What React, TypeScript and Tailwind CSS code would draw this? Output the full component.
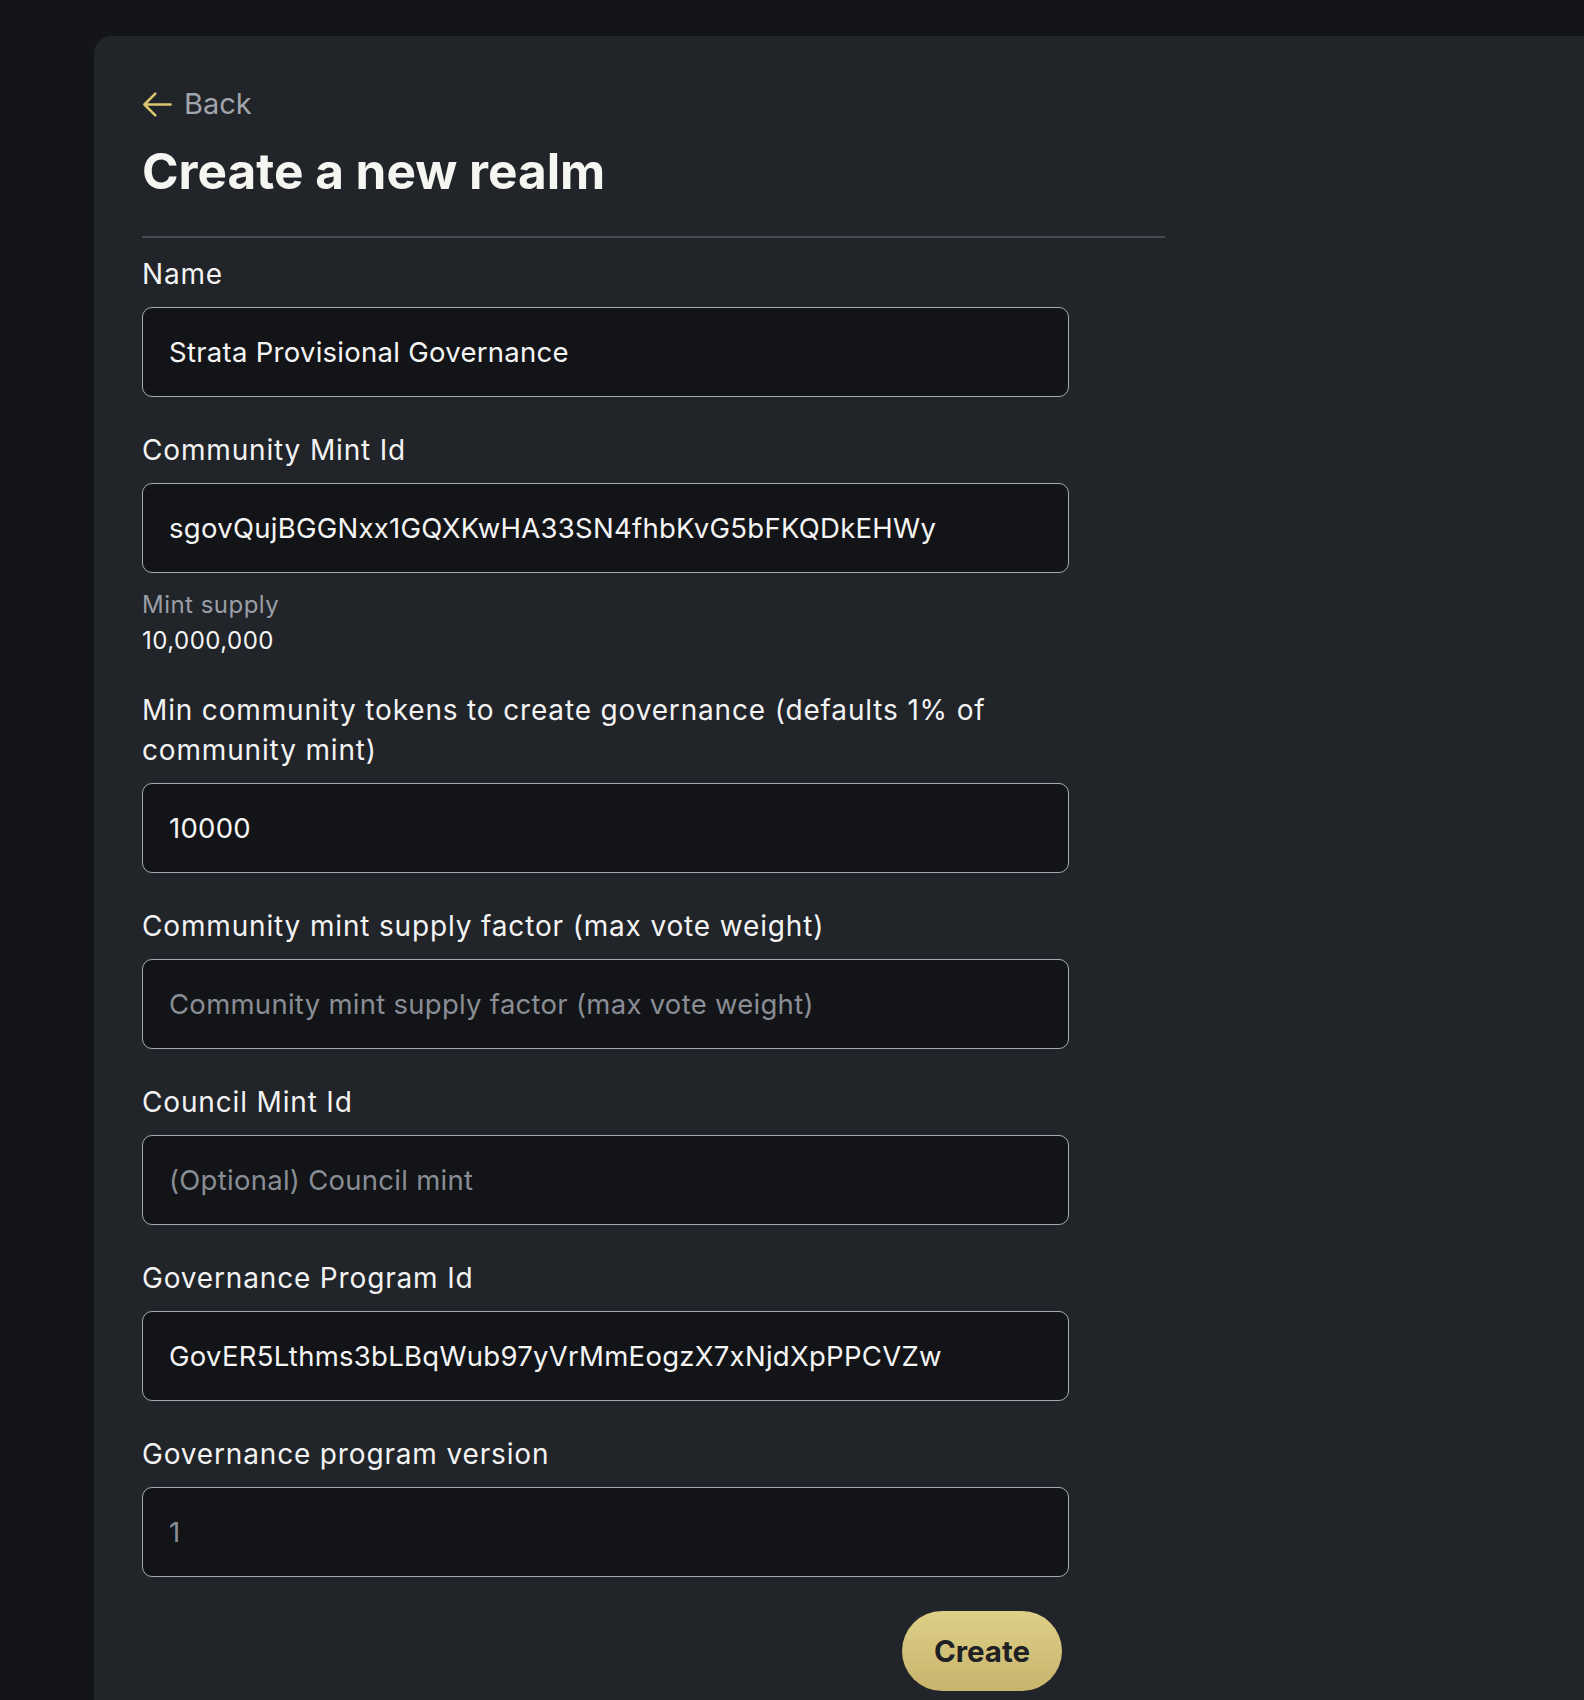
import React from 'react';

const font = { fontFamily: 'Inter, "Noto Sans", sans-serif' };

// Label + text input pair
const Field = ({
  label,
  value,
  placeholder,
}: {
  label: React.ReactNode;
  value?: string;
  placeholder?: string;
}) => (
  <div className="flex flex-col">
    <label className="text-[28px] leading-[40px] text-[#f3f3f3] tracking-[0.03em] mb-[13px]">{label}</label>
    <input
      readOnly
      defaultValue={value}
      placeholder={placeholder}
      className="h-[90px] w-full rounded-[10px] border-[1.5px] border-[#a6abb3] bg-[#131417] px-[26px] text-[27.5px] tracking-[0.01em] text-[#f5f5f5] placeholder:text-[#898d95] outline-none"
      style={font}
    />
  </div>
);

const App = () => {
  return (
    <div className="min-h-screen bg-[#141519] pl-[94px] pt-[36px]" style={font}>
      <div className="min-h-[1664px] rounded-tl-[18px] bg-[#212429] pl-[48px] pt-[50px]">
        <div className="w-[1023px]">
          {/* Header */}
          <button className="-ml-[2px] flex h-[36px] items-center gap-[9px] text-[29px] text-[#a0a4ab]">
            <svg viewBox="0 0 24 24" className="h-[35px] w-[35px]" fill="none" stroke="#dcc670" strokeWidth={1.7} strokeLinecap="round" strokeLinejoin="round">
              <path d="M10.5 19.5 3 12m0 0 7.5-7.5M3 12h18" />
            </svg>
            Back
          </button>
          <h1 className="mt-[21px] text-[49.5px] font-bold leading-[56px] text-[#f5f5f2]">Create a new realm</h1>
          <div className="mt-[37px] h-[2px] w-full bg-[#464950]" />
        </div>

        {/* Form */}
        <div className="mt-[16px] flex w-[927px] flex-col">
          <Field label="Name" value="Strata Provisional Governance" />
          <div className="mt-[33px]">
            <Field label="Community Mint Id" value="sgovQujBGGNxx1GQXKwHA33SN4fhbKvG5bFKQDkEHWy" />
          </div>
          <div className="mt-[14px] text-[24px] leading-[36px] tracking-[0.02em]">
            <div className="text-[#9a9ea6]">Mint supply</div>
            <div className="text-[#f5f5f5]">10,000,000</div>
          </div>
          <div className="mt-[31px]">
            <Field label="Min community tokens to create governance (defaults 1% of community mint)" value="10000" />
          </div>
          <div className="mt-[33px]">
            <Field
              label="Community mint supply factor (max vote weight)"
              placeholder="Community mint supply factor (max vote weight)"
            />
          </div>
          <div className="mt-[33px]">
            <Field label="Council Mint Id" placeholder="(Optional) Council mint" />
          </div>
          <div className="mt-[33px]">
            <Field label="Governance Program Id" value="GovER5Lthms3bLBqWub97yVrMmEogzX7xNjdXpPPCVZw" />
          </div>
          <div className="mt-[33px]">
            <Field label="Governance program version" placeholder="1" />
          </div>
          <div className="mt-[34px] flex justify-end pr-[7px]">
            <button className="flex h-[80px] w-[160px] items-center justify-center rounded-full bg-gradient-to-b from-[#ded087] to-[#c8b46c] text-[29.5px] font-bold text-[#1f2125]">
              Create
            </button>
          </div>
        </div>
      </div>
    </div>
  );
};

export default App;
